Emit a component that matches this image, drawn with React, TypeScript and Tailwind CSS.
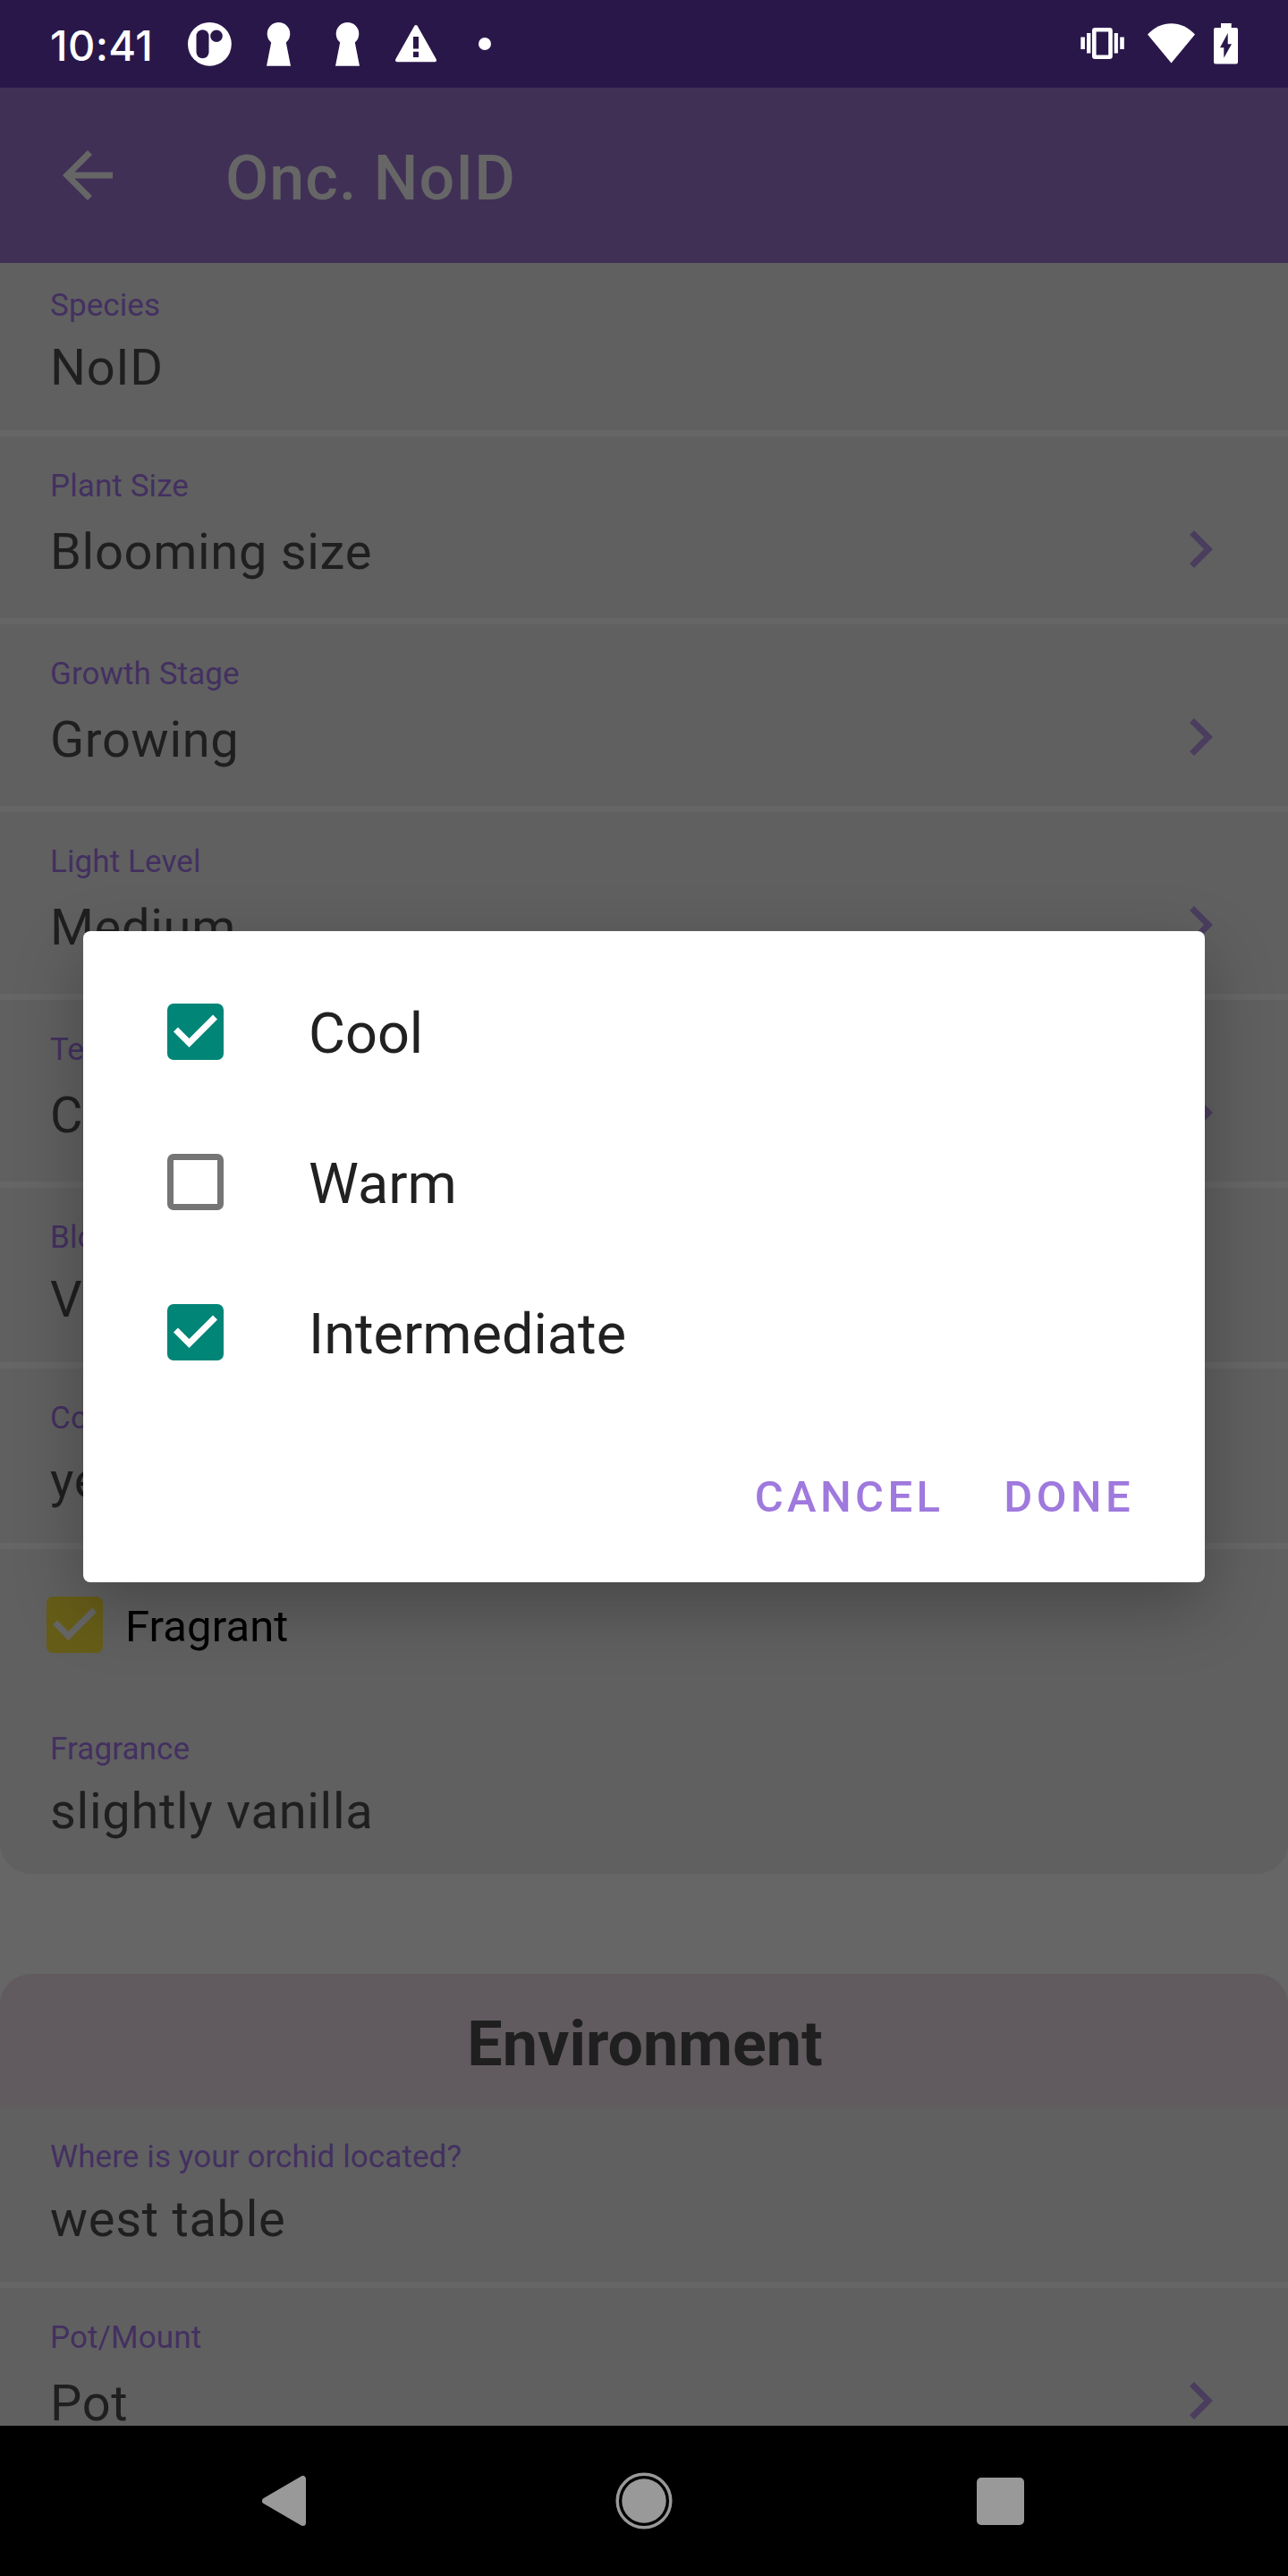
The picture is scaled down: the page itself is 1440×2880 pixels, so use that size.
import React from "react";

function StatusBar() {
  return (
    <header className="flex h-[98px] shrink-0 items-center bg-[#2a174a]">
      <span className="relative top-[2px] ml-[56px] w-[119px] whitespace-nowrap font-['Inter'] text-[47px] font-medium leading-[56px] tracking-[0.4px] text-white">
        10:41
      </span>
      <svg className="ml-[35px] h-[98px] w-[49px]" viewBox="210 0 49 98" fill="white">
        <circle cx="234.4" cy="49.3" r="24.4" />
        <rect x="219.5" y="33.3" width="14" height="32" rx="7" fill="#2a174a" />
        <circle cx="242" cy="40.2" r="6.8" fill="#2a174a" />
      </svg>
      <svg className="ml-[39px] h-[98px] w-[27px]" viewBox="298 0 27 98" fill="white">
        <circle cx="311.5" cy="37.8" r="12.8" />
        <path d="M303.5 46h16l5.5 27.8h-27z" />
      </svg>
      <svg className="ml-[50px] h-[98px] w-[27px]" viewBox="298 0 27 98" fill="white">
        <circle cx="311.5" cy="37.8" r="12.8" />
        <path d="M303.5 46h16l5.5 27.8h-27z" />
      </svg>
      <svg className="ml-[40px] h-[98px] w-[46px]" viewBox="442 0 46 98">
        <path d="M465 30L486 67.2H444z" fill="white" stroke="white" strokeWidth="4" strokeLinejoin="round" />
        <path d="M462 41h6v13.5h-6zM462 57.8h6V64h-6z" fill="#2a174a" />
      </svg>
      <span className="ml-[47px] size-[14px] rounded-full bg-white" />
      <svg className="ml-auto h-[98px] w-[49px]" viewBox="1208 0 49 98" fill="white">
        <path d="M1208.3 41.5h4.6V55h-4.6zM1215 37h4.4v22.5h-4.4zM1245.7 37h4.2v22.5h-4.2zM1252.2 41.5h4.6V55h-4.6z" />
        <rect x="1223.3" y="33.2" width="18.2" height="30.6" rx="1" fill="none" stroke="white" strokeWidth="4.6" />
      </svg>
      <svg className="ml-[26px] h-[98px] w-[54px]" viewBox="1283 0 54 98" fill="white">
        <path d="M1283 38.5C1298 22 1321 22 1336 38.5L1309.5 70.5z" />
      </svg>
      <svg className="ml-[20px] mr-[56px] h-[98px] w-[27px]" viewBox="1357 0 27 98">
        <path
          d="M1365 26h11.7v5h5.3q2 0 2 2v36.500q0 2-2 2h-23q-2 0-2-2V33q0-2 2-2h6z"
          fill="white"
        />
        <path d="M1372.700 37l-8.700 16.300h4.300v11.400l8.700-15.400h-4.300z" fill="#2a174a" />
      </svg>
    </header>
  );
}

function AppBar() {
  return (
    <div className="flex h-[196px] shrink-0 items-center bg-[#403056] pl-[56px]">
      <svg className="size-[84px]" viewBox="0 0 24 24" fill="#666666">
        <path d="M20 11H7.83l5.590-5.590L12 4l-8 8 8 8 1.410-1.410L7.830 13H20z" />
      </svg>
      <h1 className="relative top-[3px] ml-[112px] text-[70px] font-medium leading-[84px] tracking-[1.05px] text-[#666666]">
        Onc. NoID
      </h1>
    </div>
  );
}

function Divider() {
  return <div className="h-[7px] shrink-0 bg-[#666666]" />;
}

function Label({ children }: { children: React.ReactNode }) {
  return (
    <div className="whitespace-nowrap text-[35px] leading-[42px] tracking-[0.1px] text-[#433060]">{children}</div>
  );
}

function Value({ children }: { children: React.ReactNode }) {
  return (
    <div className="whitespace-nowrap text-[56px] leading-[66px] tracking-[0.7px] text-[#1f1f1f]">{children}</div>
  );
}

function TextRow({ label, value }: { label: string; value: string }) {
  return (
    <div className="flex h-[195px] shrink-0 flex-col gap-[15px] pl-[56px] pt-[35px]">
      <Label>{label}</Label>
      <Value>{value}</Value>
    </div>
  );
}

function SelectRow({ label, value }: { label: string; value: string }) {
  return (
    <div className="flex h-[203px] shrink-0 justify-between px-[56px]">
      <div className="flex flex-col gap-[19px] pt-[35px]">
        <Label>{label}</Label>
        <Value>{value}</Value>
      </div>
      <svg className="mt-[84px] size-[84px]" viewBox="0 0 24 24" fill="#4a3d5e">
        <path d="M10 6L8.590 7.410 13.170 12l-4.580 4.590L10 18l6-6z" />
      </svg>
    </div>
  );
}

const checkPath = "M10 17l-5-5 1.410-1.410L10 14.170l7.590-7.590L19 8z";

function Option({ label, checked }: { label: string; checked: boolean }) {
  return (
    <label className="flex h-[168px] items-center pl-[94px]">
      {checked ? (
        <svg className="size-[63px]" viewBox="3 3 18 18">
          <rect x="3" y="3" width="18" height="18" rx="2" fill="#018577" />
          <path d={checkPath} fill="white" />
        </svg>
      ) : (
        <span className="size-[63px] rounded-[7px] border-[7px] border-[#757575]" />
      )}
      <span className="relative top-[3px] ml-[95px] text-[63px] leading-[74px] text-[#212121]">{label}</span>
    </label>
  );
}

function Dialog() {
  return (
    <div
      role="dialog"
      className="absolute left-[93px] top-[1041px] flex h-[728px] w-[1254px] flex-col rounded-[8px] bg-white pt-[28px] shadow-[0_26px_76px_rgba(0,0,0,0.27)]"
    >
      <Option label="Cool" checked />
      <Option label="Warm" checked={false} />
      <Option label="Intermediate" checked />
      <div className="flex justify-end gap-[67px] pr-[79px] pt-[71px] text-[49px] font-medium leading-[60px] tracking-[4.375px] text-[#9f79dd]">
        <button>CANCEL</button>
        <button>DONE</button>
      </div>
    </div>
  );
}

function NavBar() {
  return (
    <nav className="flex h-[168px] shrink-0 items-center bg-black">
      <svg className="ml-[293px] h-[58px] w-[50px]" viewBox="0 0 50 58">
        <path d="M3.500 29L45.500 4.500v49z" fill="#999999" stroke="#999999" strokeWidth="7" strokeLinejoin="round" />
      </svg>
      <svg className="ml-[345px] size-[64px]" viewBox="0 0 64 64">
        <circle cx="32" cy="32" r="29.800" fill="none" stroke="#999999" strokeWidth="3.500" />
        <circle cx="32" cy="32" r="24.700" fill="#999999" />
      </svg>
      <span className="ml-[340px] size-[53px] rounded-[5px] bg-[#999999]" />
    </nav>
  );
}

export default function App() {
  return (
    <div className="relative flex h-[2880px] w-[1440px] flex-col overflow-hidden bg-[#666666] font-['Roboto',sans-serif]">
      <StatusBar />
      <AppBar />
      <main className="flex h-[2418px] shrink-0 flex-col overflow-hidden">
        <section className="-mt-[8px] flex shrink-0 flex-col rounded-b-[35px] bg-[#606060]">
          <TextRow label="Species" value="NoID" />
          <Divider />
          <SelectRow label="Plant Size" value="Blooming size" />
          <Divider />
          <SelectRow label="Growth Stage" value="Growing" />
          <Divider />
          <SelectRow label="Light Level" value="Medium" />
          <Divider />
          <SelectRow label="Temperature" value="Cool, Intermediate" />
          <Divider />
          <TextRow label="Bloom Time" value="Varies" />
          <Divider />
          <TextRow label="Color" value="yellow" />
          <Divider />
          <div className="flex h-[168px] items-center pl-[52px]">
            <svg className="size-[63px]" viewBox="3 3 18 18">
              <rect x="3" y="3" width="18" height="18" rx="2" fill="#665d18" />
              <path d={checkPath} fill="#666666" />
            </svg>
            <span className="relative top-[3px] ml-[25px] text-[49px] leading-[58px] tracking-[0.1px] text-black">Fragrant</span>
          </div>
          <TextRow label="Fragrance" value="slightly vanilla" />
        </section>
        <section className="mt-[112px] flex shrink-0 flex-col overflow-hidden rounded-t-[35px] bg-[#606060]">
          <h2 className="flex h-[149px] items-center justify-center bg-[#615b5f] text-[70px] font-bold leading-[84px] text-[#1f1f1f]">
            <span className="relative left-px top-[3px]">Environment</span>
          </h2>
          <TextRow label="Where is your orchid located?" value="west table" />
          <Divider />
          <SelectRow label="Pot/Mount" value="Pot" />
        </section>
      </main>
      <NavBar />
      <Dialog />
    </div>
  );
}
